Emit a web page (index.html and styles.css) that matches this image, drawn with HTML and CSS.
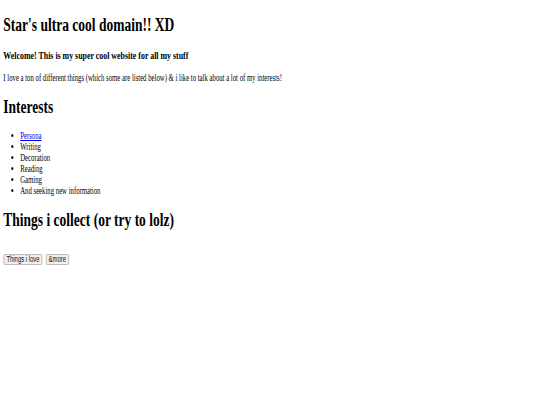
FILE: index.html
```html
<!DOCTYPE html>
<html>
<head>
<meta charset="utf-8">
<title>Star's ultra cool domain!! XD</title>
<link rel="stylesheet" href="styles.css">
</head>
<body>
<div class="page">
  <h1 class="title">Star's ultra cool domain!! XD</h1>
  <h3 class="welcome">Welcome! This is my super cool website for all my stuff</h3>
  <p class="intro">I love a ton of different things (which some are listed below) &amp; i like to talk about a lot of my interests!</p>
  <h1 class="title">Interests</h1>
  <ul class="list">
    <li><a class="link" href="#">Persona</a></li>
    <li>Writing</li>
    <li>Decoration</li>
    <li>Reading</li>
    <li>Gaming</li>
    <li>And seeking new information</li>
  </ul>
  <h1 class="title">Things i collect (or try to lolz)</h1>
  <div class="buttons">
    <button class="btn">Things i love</button>
    <button class="btn">&amp;more</button>
  </div>
</div>
</body>
</html>
```

FILE: styles.css
```css
html, body {
  margin: 0;
  padding: 0;
  background: #ffffff;
}
.page {
  box-sizing: border-box;
  width: 540px;
  padding: 1px 4.78px 0;
  font-family: "Liberation Serif", "Times New Roman", serif;
  font-size: 9.568px;
  color: #000;
  transform: scaleX(0.7054);
  transform-origin: 0 0;
}
.title {
  font-size: 19.14px;
  font-weight: bold;
  margin: 12.82px 0;
}
.welcome {
  font-size: 11.19px;
  font-weight: bold;
  margin: 11.19px 0;
}
.intro {
  margin: 9.57px 0;
}
.list {
  margin: 9.57px 0;
  padding-left: 23.92px;
}
.link {
  color: #0000ee;
}
.buttons {
  margin-top: 23px;
  display: flex;
  gap: 4.2px;
}
.btn {
  font-family: "Liberation Sans", Arial, sans-serif;
  font-size: 8.4px;
  color: #111;
  background: #f0f0f0;
  border: 1px solid #b0b0b0;
  border-radius: 2px;
  padding: 0 3.3px;
  margin: 0;
  line-height: 1.1;
}
```
